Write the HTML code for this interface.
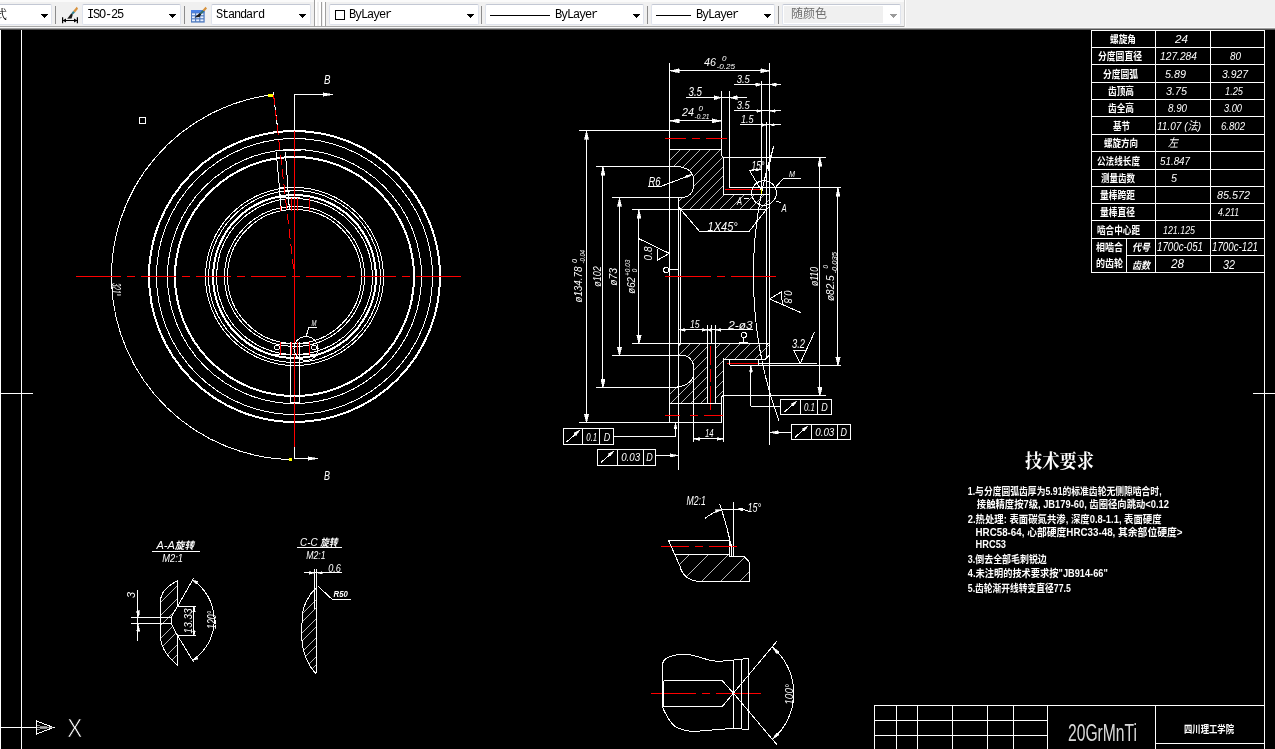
<!DOCTYPE html>
<html lang="zh"><head><meta charset="utf-8"><title>CAD</title>
<style>
html,body{margin:0;padding:0;background:#000;}
body{width:1275px;height:749px;position:relative;overflow:hidden;font-family:"Liberation Mono","Noto Sans CJK SC",monospace;}
#tb{position:absolute;left:0;top:0;width:1275px;height:27px;background:#f0f0f0;will-change:transform;}
#tb .hi{position:absolute;left:0;top:0;width:905px;height:2px;background:#fafafa;}
#tb .bot{position:absolute;left:0;top:26px;width:905px;height:1px;background:#a8a8a8;}
#l27{position:absolute;left:0;top:27px;width:1275px;height:1px;background:#f8f8f8;}
#l28{position:absolute;left:0;top:28px;width:1275px;height:1px;background:#a0a0a0;}
#l29{position:absolute;left:0;top:29px;width:1275px;height:1px;background:#505050;}
.cb{position:absolute;top:4px;height:19px;background:#fff;border:1px solid #dfe3ec;border-top-color:#c3c8d4;border-radius:2px;font-size:12px;line-height:19px;color:#000;letter-spacing:-1.2px;white-space:nowrap;}
.cb span.t{position:absolute;top:1px;}
.cb svg.ar{position:absolute;top:9px;}
.sep{position:absolute;top:6px;width:1px;height:18px;background:#8c8c8c;}
.ln{position:absolute;top:10px;height:1px;background:#000;}
svg text{fill:#fff;}
svg text.c{font-family:"Liberation Sans","Noto Sans CJK SC",sans-serif;font-style:italic;}
svg text.u{font-family:"Liberation Sans","Noto Sans CJK SC",sans-serif;}
svg text.k{font-family:"Liberation Sans","Noto Sans CJK SC",sans-serif;font-weight:bold;}
svg text.s{font-family:"Liberation Serif","Noto Serif CJK SC",serif;font-weight:bold;}
</style></head><body>
<svg width="1275" height="749" viewBox="0 0 1275 749" shape-rendering="crispEdges" style="position:absolute;left:0;top:0;will-change:transform">
<defs><clipPath id="hu"><path d="M669.5,149.5 L721.4,149.5 L721.4,155.6 L723.2,157.4 L723.2,194.6 L769.7,194.6 L769.7,206.4 L766.6,209.4 L680.8,209.4 L678.8,207.3 L678.8,197.4 L684,197.4 Q691.5,196 693.6,187.7 L693.6,177.3 Q691,167 674.5,166.3 L669.5,166.3 Z"/></clipPath>
<clipPath id="hl"><path d="M669.5,403.3 L721.4,403.3 L721.4,397.2 L723.2,395.4 L723.2,359.5 L765.2,359.5 L769.7,354.6 L769.7,346.4 L766.6,343.4 L680.8,343.4 L678.8,345.5 L678.8,355.4 L684,355.4 Q691.5,356.8 693.6,365.1 L693.6,375.5 Q691,385.8 674.5,387.3 L669.5,387.3 Z"/><rect x="0" y="0" width="0" height="0"/></clipPath>
<clipPath id="hh"><path d="M0,0H707.1V500H0Z M715.3,0H1275V500H715.3Z"/></clipPath>
<clipPath id="ha"><path d="M177.6,580.8 Q160.4,589 160.4,602 L160.4,636 Q161,652 177.6,665.2 L177.6,635.7 L171,623.2 L171,617.5 L177.6,606.2 Z"/></clipPath>
<clipPath id="hc"><path d="M315.3,588 Q303.5,602 302.2,615 L301.7,638 Q303,660 315.3,673.1 L316.9,672 L316.9,588 Z"/></clipPath>
<clipPath id="hm"><path d="M674.9,554.5 L729.4,554.5 L729.4,556.1 L744.2,556.6 L749,561.7 L749,581.3 L696.9,581.3 Q683,579 680.1,566.5 Z"/></clipPath></defs>
<g shape-rendering="crispEdges">
<rect x="0" y="29" width="1275" height="720" fill="#000" stroke="none"/>
<rect x="0" y="30" width="1" height="719" fill="#fff" stroke="none"/>
<line x1="21.5" y1="29" x2="21.5" y2="749" stroke="#fff" stroke-width="1"/>
<line x1="1264.5" y1="30" x2="1264.5" y2="749" stroke="#fff" stroke-width="1"/>
<line x1="1" y1="393.5" x2="33" y2="393.5" stroke="#fff" stroke-width="1"/>
<line x1="1253" y1="393.5" x2="1275" y2="393.5" stroke="#fff" stroke-width="1"/>
<line x1="1" y1="727.5" x2="36" y2="727.5" stroke="#fff" stroke-width="1"/>
</g>
<polygon points="36.5,721 53.5,727.5 36.5,734" fill="none" stroke="#fff" stroke-width="1"/>
<line x1="37" y1="725.5" x2="50" y2="727.5" stroke="#888" stroke-width="1"/>
<line x1="37" y1="729.5" x2="50" y2="727.5" stroke="#888" stroke-width="1"/>
<line x1="37" y1="727.5" x2="53" y2="727.5" stroke="#aaa" stroke-width="1"/>
<text class="u" x="67.2" y="737.3" font-size="25" textLength="15" lengthAdjust="spacingAndGlyphs" stroke="#000" stroke-width="0.7">X</text>
<g shape-rendering="crispEdges">
<line x1="1091" y1="30.5" x2="1265" y2="30.5" stroke="#fff" stroke-width="1"/>
<line x1="1091" y1="47.5" x2="1265" y2="47.5" stroke="#fff" stroke-width="1"/>
<line x1="1091" y1="64.5" x2="1265" y2="64.5" stroke="#fff" stroke-width="1"/>
<line x1="1091" y1="82.5" x2="1265" y2="82.5" stroke="#fff" stroke-width="1"/>
<line x1="1091" y1="99.5" x2="1265" y2="99.5" stroke="#fff" stroke-width="1"/>
<line x1="1091" y1="116.5" x2="1265" y2="116.5" stroke="#fff" stroke-width="1"/>
<line x1="1091" y1="134.5" x2="1265" y2="134.5" stroke="#fff" stroke-width="1"/>
<line x1="1091" y1="151.5" x2="1265" y2="151.5" stroke="#fff" stroke-width="1"/>
<line x1="1091" y1="169.5" x2="1265" y2="169.5" stroke="#fff" stroke-width="1"/>
<line x1="1091" y1="186.5" x2="1265" y2="186.5" stroke="#fff" stroke-width="1"/>
<line x1="1091" y1="203.5" x2="1265" y2="203.5" stroke="#fff" stroke-width="1"/>
<line x1="1091" y1="220.5" x2="1265" y2="220.5" stroke="#fff" stroke-width="1"/>
<line x1="1091" y1="238.5" x2="1265" y2="238.5" stroke="#fff" stroke-width="1"/>
<line x1="1126" y1="255.5" x2="1264" y2="255.5" stroke="#fff" stroke-width="1"/>
<line x1="1091" y1="272.5" x2="1265" y2="272.5" stroke="#fff" stroke-width="1"/>
<line x1="1091.5" y1="30" x2="1091.5" y2="273" stroke="#fff" stroke-width="1"/>
<line x1="1155.5" y1="30" x2="1155.5" y2="273" stroke="#fff" stroke-width="1"/>
<line x1="1210.5" y1="30" x2="1210.5" y2="273" stroke="#fff" stroke-width="1"/>
<line x1="1126.5" y1="238" x2="1126.5" y2="273" stroke="#fff" stroke-width="1"/>
</g>
<text class="k" x="1110" y="43.2" font-size="10.5" textLength="26" lengthAdjust="spacingAndGlyphs">螺旋角</text>
<text class="c" x="1175" y="43.2" font-size="11.73" textLength="13" lengthAdjust="spacingAndGlyphs">24</text>
<text class="k" x="1098" y="60.2" font-size="10.5" textLength="44" lengthAdjust="spacingAndGlyphs">分度圆直径</text>
<text class="c" x="1160" y="60.2" font-size="11.73" textLength="37" lengthAdjust="spacingAndGlyphs">127.284</text>
<text class="c" x="1230" y="60.2" font-size="11.73" textLength="11" lengthAdjust="spacingAndGlyphs">80</text>
<text class="k" x="1103" y="77.7" font-size="10.5" textLength="35" lengthAdjust="spacingAndGlyphs">分度圆弧</text>
<text class="c" x="1165" y="77.7" font-size="11.73" textLength="21" lengthAdjust="spacingAndGlyphs">5.89</text>
<text class="c" x="1222" y="77.7" font-size="11.73" textLength="26" lengthAdjust="spacingAndGlyphs">3.927</text>
<text class="k" x="1108" y="95.2" font-size="10.5" textLength="26" lengthAdjust="spacingAndGlyphs">齿顶高</text>
<text class="c" x="1166" y="95.2" font-size="11.73" textLength="21" lengthAdjust="spacingAndGlyphs">3.75</text>
<text class="c" x="1225" y="95.2" font-size="11.73" textLength="18" lengthAdjust="spacingAndGlyphs">1.25</text>
<text class="k" x="1108" y="112.2" font-size="10.5" textLength="26" lengthAdjust="spacingAndGlyphs">齿全高</text>
<text class="c" x="1168" y="112.2" font-size="11.73" textLength="19" lengthAdjust="spacingAndGlyphs">8.90</text>
<text class="c" x="1224" y="112.2" font-size="11.73" textLength="18" lengthAdjust="spacingAndGlyphs">3.00</text>
<text class="k" x="1113" y="129.7" font-size="10.5" textLength="17" lengthAdjust="spacingAndGlyphs">基节</text>
<text class="c" x="1157" y="129.7" font-size="11.73" textLength="44" lengthAdjust="spacingAndGlyphs">11.07 (法)</text>
<text class="c" x="1221" y="129.7" font-size="11.73" textLength="24" lengthAdjust="spacingAndGlyphs">6.802</text>
<text class="k" x="1104" y="147.2" font-size="10.5" textLength="34" lengthAdjust="spacingAndGlyphs">螺旋方向</text>
<text class="c" x="1168" y="147.2" font-size="11.73" textLength="10" lengthAdjust="spacingAndGlyphs">左</text>
<text class="k" x="1097" y="164.7" font-size="10.5" textLength="43" lengthAdjust="spacingAndGlyphs">公法线长度</text>
<text class="c" x="1160" y="164.7" font-size="11.73" textLength="30" lengthAdjust="spacingAndGlyphs">51.847</text>
<text class="k" x="1101" y="182.2" font-size="10.5" textLength="34" lengthAdjust="spacingAndGlyphs">测量齿数</text>
<text class="c" x="1171" y="182.2" font-size="11.73" textLength="6" lengthAdjust="spacingAndGlyphs">5</text>
<text class="k" x="1100" y="199.2" font-size="10.5" textLength="35" lengthAdjust="spacingAndGlyphs">量棒跨距</text>
<text class="c" x="1217" y="199.2" font-size="11.73" textLength="33" lengthAdjust="spacingAndGlyphs">85.572</text>
<text class="k" x="1100" y="216.2" font-size="10.5" textLength="35" lengthAdjust="spacingAndGlyphs">量棒直径</text>
<text class="c" x="1218" y="216.2" font-size="11.73" textLength="21" lengthAdjust="spacingAndGlyphs">4.211</text>
<text class="k" x="1097" y="233.7" font-size="10.5" textLength="43" lengthAdjust="spacingAndGlyphs">啮合中心距</text>
<text class="c" x="1163" y="233.7" font-size="11.73" textLength="32" lengthAdjust="spacingAndGlyphs">121.125</text>
<text class="k" x="1096" y="250.5" font-size="10.5" textLength="27" lengthAdjust="spacingAndGlyphs">相啮合</text>
<text class="k" x="1096" y="267" font-size="10.5" textLength="27" lengthAdjust="spacingAndGlyphs">的齿轮</text>
<text class="k" x="1132" y="251" font-size="10" font-style="italic" textLength="18" lengthAdjust="spacingAndGlyphs">代号</text>
<text class="k" x="1132" y="268.5" font-size="10" font-style="italic" textLength="18" lengthAdjust="spacingAndGlyphs">齿数</text>
<text class="c" x="1157" y="251" font-size="11.87" textLength="46" lengthAdjust="spacingAndGlyphs">1700c-051</text>
<text class="c" x="1212" y="251" font-size="11.87" textLength="46" lengthAdjust="spacingAndGlyphs">1700c-121</text>
<text class="c" x="1171" y="268" font-size="11.87" textLength="13" lengthAdjust="spacingAndGlyphs">28</text>
<text class="c" x="1223" y="268.5" font-size="11.87" textLength="12" lengthAdjust="spacingAndGlyphs">32</text>
<g shape-rendering="crispEdges">
<line x1="874" y1="705.5" x2="1265" y2="705.5" stroke="#fff" stroke-width="1"/>
<line x1="874" y1="720.5" x2="1048" y2="720.5" stroke="#fff" stroke-width="1"/>
<line x1="874" y1="735.5" x2="1048" y2="735.5" stroke="#fff" stroke-width="1"/>
<line x1="1155" y1="743.5" x2="1265" y2="743.5" stroke="#fff" stroke-width="1"/>
<line x1="874.5" y1="705" x2="874.5" y2="749" stroke="#fff" stroke-width="1"/>
<line x1="896.5" y1="705" x2="896.5" y2="749" stroke="#fff" stroke-width="1"/>
<line x1="917.5" y1="705" x2="917.5" y2="749" stroke="#fff" stroke-width="1"/>
<line x1="952.5" y1="705" x2="952.5" y2="749" stroke="#fff" stroke-width="1"/>
<line x1="987.5" y1="705" x2="987.5" y2="749" stroke="#fff" stroke-width="1"/>
<line x1="1013.5" y1="705" x2="1013.5" y2="749" stroke="#fff" stroke-width="1"/>
<line x1="1047.5" y1="705" x2="1047.5" y2="749" stroke="#fff" stroke-width="1"/>
<line x1="1155.5" y1="705" x2="1155.5" y2="749" stroke="#fff" stroke-width="1"/>
</g>
<text class="u" x="1068" y="741.3" font-size="23.5" textLength="69" lengthAdjust="spacingAndGlyphs" fill="#fff" opacity="0.85">20GrMnTi</text>
<text class="k" x="1184" y="732.5" font-size="10.5" textLength="50" lengthAdjust="spacingAndGlyphs">四川理工学院</text>
<text class="s" x="1025" y="467.5" font-size="19" textLength="69" lengthAdjust="spacingAndGlyphs">技术要求</text>
<text class="k" x="967.8" y="494.5" font-size="10.5" textLength="193.8" lengthAdjust="spacingAndGlyphs">1.与分度圆弧齿厚为5.91的标准齿轮无侧隙啮合时,</text>
<text class="k" x="976.8" y="508" font-size="10.5" textLength="192.2" lengthAdjust="spacingAndGlyphs">接触精度按7级, JB179-60, 齿圈径向跳动&lt;0.12</text>
<text class="k" x="967.8" y="522.5" font-size="10.5" textLength="193.8" lengthAdjust="spacingAndGlyphs">2.热处理: 表面碳氮共渗, 深度0.8-1.1, 表面硬度</text>
<text class="k" x="975.5" y="536" font-size="10.5" textLength="207" lengthAdjust="spacingAndGlyphs">HRC58-64, 心部硬度HRC33-48, 其余部位硬度&gt;</text>
<text class="k" x="975.5" y="548" font-size="10.5" textLength="30.5" lengthAdjust="spacingAndGlyphs">HRC53</text>
<text class="k" x="967.8" y="563" font-size="10.5" textLength="79" lengthAdjust="spacingAndGlyphs">3.倒去全部毛刺锐边</text>
<text class="k" x="967.8" y="577" font-size="10.5" textLength="140" lengthAdjust="spacingAndGlyphs">4.未注明的技术要求按"JB914-66"</text>
<text class="k" x="967.8" y="591.5" font-size="10.5" textLength="103" lengthAdjust="spacingAndGlyphs">5.齿轮渐开线转变直径77.5</text>
<g shape-rendering="crispEdges">
<circle cx="294.5" cy="276.5" r="145.5" fill="none" stroke="#fff" stroke-width="2"/>
<circle cx="294.5" cy="276.5" r="138" fill="none" stroke="#fff" stroke-width="1"/>
<circle cx="294.5" cy="276.5" r="127" fill="none" stroke="#fff" stroke-width="1"/>
<circle cx="294.5" cy="276.5" r="119.5" fill="none" stroke="#fff" stroke-width="2"/>
<circle cx="294.5" cy="276.5" r="89" fill="none" stroke="#fff" stroke-width="1"/>
<circle cx="294.5" cy="276.5" r="86" fill="none" stroke="#fff" stroke-width="1"/>
<circle cx="294.5" cy="276.5" r="81.5" fill="none" stroke="#fff" stroke-width="2"/>
<circle cx="294.5" cy="276.5" r="78" fill="none" stroke="#fff" stroke-width="1"/>
<circle cx="294.5" cy="276.5" r="70" fill="none" stroke="#fff" stroke-width="1"/>
<circle cx="294.5" cy="276.5" r="67" fill="none" stroke="#fff" stroke-width="1"/>
<path d="M274.2,94.63 A183,183 0 0 0 291,459.47" fill="none" stroke="#fff" stroke-width="1"/>
<line x1="86" y1="276.5" x2="451" y2="276.5" stroke="#ff0000" stroke-width="1" stroke-dasharray="35 6 8 6"/>
<line x1="76" y1="276.5" x2="86" y2="276.5" stroke="#ff0000" stroke-width="1"/>
<line x1="451" y1="276.5" x2="461" y2="276.5" stroke="#ff0000" stroke-width="1"/>
<line x1="294.5" y1="131" x2="294.5" y2="447" stroke="#ff0000" stroke-width="1"/>
<line x1="294.5" y1="94" x2="294.5" y2="131" stroke="#fff" stroke-width="1"/>
<line x1="294.5" y1="447" x2="294.5" y2="459" stroke="#fff" stroke-width="1"/>
<line x1="294" y1="94.5" x2="323" y2="94.5" stroke="#fff" stroke-width="1"/>
<line x1="294" y1="458.5" x2="309" y2="458.5" stroke="#fff" stroke-width="1"/>
<line x1="276" y1="150.5" x2="301" y2="150.5" stroke="#fff" stroke-width="1"/>
<line x1="276" y1="157.5" x2="295" y2="157.5" stroke="#fff" stroke-width="1"/>
<line x1="280" y1="187.5" x2="290" y2="187.5" stroke="#fff" stroke-width="1"/>
<line x1="280" y1="191.5" x2="290" y2="191.5" stroke="#fff" stroke-width="1"/>
<line x1="279" y1="197.5" x2="300" y2="197.5" stroke="#fff" stroke-width="1"/>
<line x1="280.5" y1="198" x2="280.5" y2="211" stroke="#ff0000" stroke-width="1"/>
<line x1="291.5" y1="198" x2="291.5" y2="211" stroke="#ff0000" stroke-width="1"/>
<line x1="297.5" y1="198" x2="297.5" y2="211" stroke="#ff0000" stroke-width="1"/>
<line x1="309.5" y1="198" x2="309.5" y2="211" stroke="#ff0000" stroke-width="1"/>
<line x1="280" y1="343.5" x2="310" y2="343.5" stroke="#fff" stroke-width="1"/>
<line x1="274" y1="354.5" x2="316" y2="354.5" stroke="#fff" stroke-width="1"/>
<line x1="280.5" y1="342" x2="280.5" y2="355" stroke="#ff0000" stroke-width="1"/>
<line x1="291.5" y1="342" x2="291.5" y2="355" stroke="#ff0000" stroke-width="1"/>
<line x1="297.5" y1="342" x2="297.5" y2="355" stroke="#ff0000" stroke-width="1"/>
<line x1="309.5" y1="342" x2="309.5" y2="355" stroke="#ff0000" stroke-width="1"/>
<line x1="290.5" y1="342" x2="290.5" y2="403" stroke="#fff" stroke-width="1"/>
<line x1="299.5" y1="342" x2="299.5" y2="403" stroke="#fff" stroke-width="1"/>
<line x1="290" y1="395.5" x2="300" y2="395.5" stroke="#fff" stroke-width="1"/>
<line x1="290" y1="402.5" x2="300" y2="402.5" stroke="#fff" stroke-width="1"/>
</g>
<rect x="139.5" y="117.5" width="6" height="6" fill="none" stroke="#fff"/>
<line x1="273.3" y1="92" x2="278.2" y2="133.6" stroke="#fff" stroke-width="1"/>
<line x1="276.2" y1="151.8" x2="281.4" y2="210" stroke="#fff" stroke-width="1"/>
<line x1="285.4" y1="151.8" x2="289.4" y2="210" stroke="#fff" stroke-width="1"/>
<line x1="273.6" y1="95" x2="294.5" y2="276.5" stroke="#ff0000" stroke-width="1" stroke-dasharray="10 5"/>
<polygon points="333,94.5 323,96.2 323,92.8" fill="#fff" stroke="#fff" stroke-width="0.6"/>
<polygon points="318,458.5 308,460.2 308,456.8" fill="#fff" stroke="#fff" stroke-width="0.6"/>
<text class="c" x="324" y="83.5" font-size="13.27" textLength="6.5" lengthAdjust="spacingAndGlyphs">B</text>
<text class="c" x="324" y="479.5" font-size="11.87" textLength="6" lengthAdjust="spacingAndGlyphs">B</text>
<rect x="268" y="94" width="5" height="3" fill="#ffff00" stroke="none"/>
<rect x="289" y="458" width="3" height="3" fill="#ffff00" stroke="none"/>
<text class="c" transform="translate(112,283) rotate(90)" font-size="12.57" textLength="13" lengthAdjust="spacingAndGlyphs">321°</text>
<g shape-rendering="crispEdges">
<circle cx="306" cy="348.5" r="12" fill="none" stroke="#fff" stroke-width="1"/>
</g>
<polyline points="306.1,336.7 308.8,327.4 316.8,327.4" fill="none" stroke="#fff" stroke-width="1"/>
<text class="c" x="311.5" y="325.5" font-size="8.38" textLength="5" lengthAdjust="spacingAndGlyphs">M</text>
<circle cx="277" cy="347.5" r="2.5" fill="none" stroke="#fff" stroke-width="1"/>
<circle cx="314" cy="347.5" r="2.5" fill="none" stroke="#fff" stroke-width="1"/>
<g clip-path="url(#hu)" stroke="#fff" stroke-width="0.72">
<line x1="700.4" y1="100" x2="500.4" y2="300"/>
<line x1="710.3" y1="100" x2="510.3" y2="300"/>
<line x1="720.2" y1="100" x2="520.2" y2="300"/>
<line x1="730.1" y1="100" x2="530.1" y2="300"/>
<line x1="740" y1="100" x2="540" y2="300"/>
<line x1="749.9" y1="100" x2="549.9" y2="300"/>
<line x1="759.8" y1="100" x2="559.8" y2="300"/>
<line x1="769.7" y1="100" x2="569.7" y2="300"/>
<line x1="779.6" y1="100" x2="579.6" y2="300"/>
<line x1="789.5" y1="100" x2="589.5" y2="300"/>
<line x1="799.4" y1="100" x2="599.4" y2="300"/>
<line x1="809.3" y1="100" x2="609.3" y2="300"/>
<line x1="819.2" y1="100" x2="619.2" y2="300"/>
<line x1="829.1" y1="100" x2="629.1" y2="300"/>
<line x1="839" y1="100" x2="639" y2="300"/>
<line x1="848.9" y1="100" x2="648.9" y2="300"/>
<line x1="858.8" y1="100" x2="658.8" y2="300"/>
<line x1="868.7" y1="100" x2="668.7" y2="300"/>
<line x1="878.6" y1="100" x2="678.6" y2="300"/>
<line x1="888.5" y1="100" x2="688.5" y2="300"/>
<line x1="898.4" y1="100" x2="698.4" y2="300"/>
</g>
<g clip-path="url(#hh)"><g clip-path="url(#hl)" stroke="#fff" stroke-width="0.72">
<line x1="694.8" y1="300" x2="494.8" y2="500"/>
<line x1="704.7" y1="300" x2="504.7" y2="500"/>
<line x1="714.6" y1="300" x2="514.6" y2="500"/>
<line x1="724.5" y1="300" x2="524.5" y2="500"/>
<line x1="734.4" y1="300" x2="534.4" y2="500"/>
<line x1="744.3" y1="300" x2="544.3" y2="500"/>
<line x1="754.2" y1="300" x2="554.2" y2="500"/>
<line x1="764.1" y1="300" x2="564.1" y2="500"/>
<line x1="774" y1="300" x2="574" y2="500"/>
<line x1="783.9" y1="300" x2="583.9" y2="500"/>
<line x1="793.8" y1="300" x2="593.8" y2="500"/>
<line x1="803.7" y1="300" x2="603.7" y2="500"/>
<line x1="813.6" y1="300" x2="613.6" y2="500"/>
<line x1="823.5" y1="300" x2="623.5" y2="500"/>
<line x1="833.4" y1="300" x2="633.4" y2="500"/>
<line x1="843.3" y1="300" x2="643.3" y2="500"/>
<line x1="853.2" y1="300" x2="653.2" y2="500"/>
<line x1="863.1" y1="300" x2="663.1" y2="500"/>
<line x1="873" y1="300" x2="673" y2="500"/>
<line x1="882.9" y1="300" x2="682.9" y2="500"/>
<line x1="892.8" y1="300" x2="692.8" y2="500"/>
</g></g>
<path d="M669.5,149.5 L721.4,149.5 L721.4,155.6 L723.2,157.4 L723.2,194.6 L769.7,194.6 L769.7,206.4 L766.6,209.4 L680.8,209.4 L678.8,207.3 L678.8,197.4 L684,197.4 Q691.5,196 693.6,187.7 L693.6,177.3 Q691,167 674.5,166.3 L669.5,166.3 Z" fill="none" stroke="#fff" stroke-width="1"/>
<path d="M669.5,403.3 L721.4,403.3 L721.4,397.2 L723.2,395.4 L723.2,359.5 L765.2,359.5 L769.7,354.6 L769.7,346.4 L766.6,343.4 L680.8,343.4 L678.8,345.5 L678.8,355.4 L684,355.4 Q691.5,356.8 693.6,365.1 L693.6,375.5 Q691,385.8 674.5,387.3 L669.5,387.3 Z" fill="none" stroke="#fff" stroke-width="1"/>
<g shape-rendering="crispEdges">
<line x1="669.5" y1="62.8" x2="669.5" y2="422.4" stroke="#fff" stroke-width="1"/>
<line x1="769.5" y1="62.8" x2="769.5" y2="444.6" stroke="#fff" stroke-width="1"/>
<line x1="678.5" y1="197.4" x2="678.5" y2="355.4" stroke="#fff" stroke-width="1"/>
<line x1="678.5" y1="355.4" x2="678.5" y2="470" stroke="#fff" stroke-width="1"/>
<line x1="680.5" y1="209.4" x2="680.5" y2="343.4" stroke="#fff" stroke-width="1"/>
<line x1="721.5" y1="91" x2="721.5" y2="149.5" stroke="#fff" stroke-width="1"/>
<line x1="729.5" y1="91" x2="729.5" y2="187.5" stroke="#fff" stroke-width="1"/>
<line x1="723.5" y1="157.4" x2="723.5" y2="194.6" stroke="#fff" stroke-width="1"/>
<line x1="761.5" y1="81" x2="761.5" y2="194.6" stroke="#fff" stroke-width="1"/>
<line x1="766.5" y1="121.8" x2="766.5" y2="209.4" stroke="#fff" stroke-width="1"/>
<line x1="766.5" y1="209.4" x2="766.5" y2="358.2" stroke="#fff" stroke-width="1"/>
<line x1="721.5" y1="403.3" x2="721.5" y2="422.4" stroke="#fff" stroke-width="1"/>
<line x1="723.5" y1="358.2" x2="723.5" y2="442" stroke="#fff" stroke-width="1"/>
<line x1="707.5" y1="325" x2="707.5" y2="403.3" stroke="#fff" stroke-width="1"/>
<line x1="715.5" y1="325" x2="715.5" y2="403.3" stroke="#fff" stroke-width="1"/>
<line x1="711.5" y1="325" x2="711.5" y2="343" stroke="#fff" stroke-width="1"/>
<line x1="693.5" y1="375.8" x2="693.5" y2="442" stroke="#fff" stroke-width="1"/>
<line x1="710.5" y1="345.6" x2="710.5" y2="409.8" stroke="#ff0000" stroke-width="1" stroke-dasharray="19 4 13.5 3.5 24.5"/>
<line x1="579" y1="130.5" x2="721.9" y2="130.5" stroke="#fff" stroke-width="1"/>
<line x1="579" y1="422.5" x2="721.9" y2="422.5" stroke="#fff" stroke-width="1"/>
<line x1="596" y1="166.5" x2="675" y2="166.5" stroke="#fff" stroke-width="1"/>
<line x1="596" y1="387.5" x2="679" y2="387.5" stroke="#fff" stroke-width="1"/>
<line x1="612" y1="197.5" x2="684" y2="197.5" stroke="#fff" stroke-width="1"/>
<line x1="612" y1="355.5" x2="682" y2="355.5" stroke="#fff" stroke-width="1"/>
<line x1="632" y1="209.5" x2="767" y2="209.5" stroke="#fff" stroke-width="1"/>
<line x1="632" y1="343.5" x2="770" y2="343.5" stroke="#fff" stroke-width="1"/>
<line x1="669.5" y1="149.5" x2="721.4" y2="149.5" stroke="#fff" stroke-width="1"/>
<line x1="669.5" y1="403.5" x2="721.4" y2="403.5" stroke="#fff" stroke-width="1"/>
<line x1="665.3" y1="138.5" x2="727" y2="138.5" stroke="#ff0000" stroke-width="1" stroke-dasharray="21 6 8 6"/>
<line x1="665.3" y1="415.5" x2="723" y2="415.5" stroke="#ff0000" stroke-width="1" stroke-dasharray="14.4 10.3 8 6 19"/>
<line x1="724.8" y1="189.5" x2="763" y2="189.5" stroke="#ff0000" stroke-width="1"/>
<line x1="727" y1="363.5" x2="760.5" y2="363.5" stroke="#ff0000" stroke-width="1"/>
<line x1="665.3" y1="276.5" x2="776" y2="276.5" stroke="#ff0000" stroke-width="1" stroke-dasharray="46 6 8 6"/>
<line x1="723.2" y1="157.5" x2="826" y2="157.5" stroke="#fff" stroke-width="1"/>
<line x1="723.2" y1="395.5" x2="826" y2="395.5" stroke="#fff" stroke-width="1"/>
<line x1="729.5" y1="187.5" x2="840.5" y2="187.5" stroke="#fff" stroke-width="1"/>
<line x1="729.5" y1="365.5" x2="840.5" y2="365.5" stroke="#fff" stroke-width="1"/>
<line x1="759" y1="363.5" x2="816.6" y2="363.5" stroke="#fff" stroke-width="1"/>
<line x1="586.5" y1="130.4" x2="586.5" y2="422.4" stroke="#fff" stroke-width="1"/>
<line x1="602.5" y1="166.3" x2="602.5" y2="387.3" stroke="#fff" stroke-width="1"/>
<line x1="619.5" y1="197.4" x2="619.5" y2="355.4" stroke="#fff" stroke-width="1"/>
<line x1="638.5" y1="209.4" x2="638.5" y2="343.4" stroke="#fff" stroke-width="1"/>
<line x1="819.5" y1="157.4" x2="819.5" y2="395.4" stroke="#fff" stroke-width="1"/>
<line x1="837.5" y1="187.3" x2="837.5" y2="365.2" stroke="#fff" stroke-width="1"/>
<line x1="669.5" y1="70.5" x2="769.7" y2="70.5" stroke="#fff" stroke-width="1"/>
<line x1="734" y1="84.5" x2="781" y2="84.5" stroke="#fff" stroke-width="1"/>
<line x1="686" y1="97.5" x2="747" y2="97.5" stroke="#fff" stroke-width="1"/>
<line x1="734" y1="110.5" x2="781" y2="110.5" stroke="#fff" stroke-width="1"/>
<line x1="740" y1="124.5" x2="781" y2="124.5" stroke="#fff" stroke-width="1"/>
<line x1="669.5" y1="120.5" x2="721.4" y2="120.5" stroke="#fff" stroke-width="1"/>
<line x1="679.7" y1="329.5" x2="753.4" y2="329.5" stroke="#fff" stroke-width="1"/>
<line x1="693.2" y1="438.5" x2="723.6" y2="438.5" stroke="#fff" stroke-width="1"/>
<line x1="729.5" y1="359.5" x2="729.5" y2="365.4" stroke="#fff" stroke-width="1"/>
<line x1="758.5" y1="359.5" x2="758.5" y2="365.4" stroke="#fff" stroke-width="1"/>
<line x1="750.5" y1="365.6" x2="750.5" y2="406.3" stroke="#fff" stroke-width="1"/>
<line x1="750.5" y1="406.5" x2="770" y2="406.5" stroke="#fff" stroke-width="1"/>
</g>
<polygon points="586.5,130.4 588.6,139.4 584.4,139.4" fill="#fff" stroke="#fff" stroke-width="0.6"/>
<polygon points="586.5,423.4 584.4,414.4 588.6,414.4" fill="#fff" stroke="#fff" stroke-width="0.6"/>
<polygon points="603,166.3 605.1,175.3 600.9,175.3" fill="#fff" stroke="#fff" stroke-width="0.6"/>
<polygon points="603,388 600.9,379 605.1,379" fill="#fff" stroke="#fff" stroke-width="0.6"/>
<polygon points="619.5,197.4 621.6,206.4 617.4,206.4" fill="#fff" stroke="#fff" stroke-width="0.6"/>
<polygon points="619.5,356.4 617.4,347.4 621.6,347.4" fill="#fff" stroke="#fff" stroke-width="0.6"/>
<polygon points="639,209.4 641.1,218.4 636.9,218.4" fill="#fff" stroke="#fff" stroke-width="0.6"/>
<polygon points="639,344.4 636.9,335.4 641.1,335.4" fill="#fff" stroke="#fff" stroke-width="0.6"/>
<polygon points="819.9,157.4 822,166.4 817.8,166.4" fill="#fff" stroke="#fff" stroke-width="0.6"/>
<polygon points="819.9,396.4 817.8,387.4 822,387.4" fill="#fff" stroke="#fff" stroke-width="0.6"/>
<polygon points="838,187.3 840.1,196.3 835.9,196.3" fill="#fff" stroke="#fff" stroke-width="0.6"/>
<polygon points="838,366.2 835.9,357.2 840.1,357.2" fill="#fff" stroke="#fff" stroke-width="0.6"/>
<polygon points="670,70.8 679,68.8 679,72.8" fill="#fff" stroke="#fff" stroke-width="0.6"/>
<polygon points="769.7,70.8 760.7,72.8 760.7,68.8" fill="#fff" stroke="#fff" stroke-width="0.6"/>
<polygon points="670,120.9 679,118.9 679,122.9" fill="#fff" stroke="#fff" stroke-width="0.6"/>
<polygon points="721.4,120.9 712.4,122.9 712.4,118.9" fill="#fff" stroke="#fff" stroke-width="0.6"/>
<polygon points="761.6,84.6 755.6,86.4 755.6,82.8" fill="#fff" stroke="#fff" stroke-width="0.6"/>
<polygon points="770.2,84.6 776.2,82.8 776.2,86.4" fill="#fff" stroke="#fff" stroke-width="0.6"/>
<polygon points="721.4,97.7 714.4,99.6 714.4,95.8" fill="#fff" stroke="#fff" stroke-width="0.6"/>
<polygon points="730,97.7 737,95.8 737,99.6" fill="#fff" stroke="#fff" stroke-width="0.6"/>
<polygon points="761.6,111 756.6,112.4 756.6,109.6" fill="#fff" stroke="#fff" stroke-width="0.6"/>
<polygon points="770.2,111 775.2,109.6 775.2,112.4" fill="#fff" stroke="#fff" stroke-width="0.6"/>
<polygon points="766.4,124.9 762.4,126.1 762.4,123.7" fill="#fff" stroke="#fff" stroke-width="0.6"/>
<polygon points="770.2,124.9 774.2,123.7 774.2,126.1" fill="#fff" stroke="#fff" stroke-width="0.6"/>
<polygon points="679.3,329.9 685.3,328.5 685.3,331.3" fill="#fff" stroke="#fff" stroke-width="0.6"/>
<polygon points="707.1,329.9 702.1,331.3 702.1,328.5" fill="#fff" stroke="#fff" stroke-width="0.6"/>
<polygon points="707.6,329.9 710.6,328.6 710.6,331.2" fill="#fff" stroke="#fff" stroke-width="0.6"/>
<polygon points="715.8,329.9 720.8,328.5 720.8,331.3" fill="#fff" stroke="#fff" stroke-width="0.6"/>
<polygon points="693.7,438.9 699.7,437.5 699.7,440.3" fill="#fff" stroke="#fff" stroke-width="0.6"/>
<polygon points="723.2,438.9 717.2,440.3 717.2,437.5" fill="#fff" stroke="#fff" stroke-width="0.6"/>
<polygon points="751,366 752.4,372 749.6,372" fill="#fff" stroke="#fff" stroke-width="0.6"/>
<path d="M773.7,146 A424,424 0 0 0 778.9,420.7" fill="none" stroke="#fff" stroke-width="1"/>
<polyline points="680.6,209.4 699.7,231.5 749,231.5 766.5,209.4" fill="none" stroke="#fff" stroke-width="1"/>
<text class="c" x="707.5" y="230.5" font-size="11.87" textLength="30.3" lengthAdjust="spacingAndGlyphs">1X45°</text>
<polyline points="648,186.5 660.6,186.5 691.9,174.6" fill="none" stroke="#fff" stroke-width="1"/>
<polygon points="691.9,174.6 686.75,177.95 685.83,175.52" fill="#fff" stroke="#fff" stroke-width="0.6"/>
<text class="c" x="648.5" y="185.5" font-size="11.87" textLength="12.1" lengthAdjust="spacingAndGlyphs">R6</text>
<circle cx="764" cy="193" r="12.3" fill="none" stroke="#fff" stroke-width="1"/>
<polyline points="776.3,186.4 783.3,178.5 801.1,178.5" fill="none" stroke="#fff" stroke-width="1"/>
<text class="c" x="789" y="176.5" font-size="9.08" textLength="6" lengthAdjust="spacingAndGlyphs">M</text>
<line x1="776" y1="201" x2="780.7" y2="202.5" stroke="#fff" stroke-width="1"/>
<text class="c" x="781.5" y="211.5" font-size="10.89" textLength="5.2" lengthAdjust="spacingAndGlyphs">A</text>
<text class="c" x="737" y="205" font-size="11.17" textLength="5" lengthAdjust="spacingAndGlyphs">A</text>
<line x1="743.5" y1="198" x2="749" y2="198" stroke="#fff" stroke-width="1"/>
<text class="c" x="751.5" y="170.4" font-size="12.15" textLength="13" lengthAdjust="spacingAndGlyphs">15°</text>
<line x1="749.4" y1="170.3" x2="761.6" y2="190.7" stroke="#fff" stroke-width="1"/>
<line x1="749.4" y1="170.3" x2="760.7" y2="169.6" stroke="#fff" stroke-width="1"/>
<polygon points="760.7,169.6 755.8,171.15 755.63,168.75" fill="#fff" stroke="#fff" stroke-width="0.6"/>
<line x1="773.7" y1="146" x2="768" y2="171" stroke="#fff" stroke-width="1"/>
<rect x="760.6" y="189" width="1.2" height="5" fill="#ffff00" stroke="none"/>
<text class="c" x="704" y="65.8" font-size="10.8" textLength="12" lengthAdjust="spacingAndGlyphs">46</text>
<text class="c" x="716.5" y="68.7" font-size="8" textLength="18.5" lengthAdjust="spacingAndGlyphs">-0.25</text>
<text class="c" x="722" y="61" font-size="8">0</text>
<text class="c" x="736.7" y="83.2" font-size="11.45" textLength="13.1" lengthAdjust="spacingAndGlyphs">3.5</text>
<text class="c" x="688.5" y="95.5" font-size="11.87" textLength="13.5" lengthAdjust="spacingAndGlyphs">3.5</text>
<text class="c" x="736.7" y="109.3" font-size="11.59" textLength="13.1" lengthAdjust="spacingAndGlyphs">3.5</text>
<text class="c" x="741" y="123.3" font-size="11.59" textLength="12.7" lengthAdjust="spacingAndGlyphs">1.5</text>
<text class="c" x="682" y="116" font-size="10.8" textLength="12" lengthAdjust="spacingAndGlyphs">24</text>
<text class="c" x="694.5" y="119" font-size="8" textLength="15" lengthAdjust="spacingAndGlyphs">-0.21</text>
<text class="c" x="698.5" y="111" font-size="8">0</text>
<text class="c" transform="translate(582.3,302.6) rotate(-90)" font-size="11.7" textLength="36" lengthAdjust="spacingAndGlyphs">ø134.78</text>
<text class="c" transform="translate(585,263.5) rotate(-90)" font-size="7.5" textLength="13.5" lengthAdjust="spacingAndGlyphs">-0.04</text>
<text class="c" transform="translate(576.7,263) rotate(-90)" font-size="7.5" textLength="4" lengthAdjust="spacingAndGlyphs">0</text>
<text class="c" transform="translate(601,286.7) rotate(-90)" font-size="11.7" textLength="20.5" lengthAdjust="spacingAndGlyphs">ø102</text>
<text class="c" transform="translate(616.9,285.8) rotate(-90)" font-size="11.7" textLength="17.8" lengthAdjust="spacingAndGlyphs">ø73</text>
<text class="c" transform="translate(634.6,293.7) rotate(-90)" font-size="11.7" textLength="16.7" lengthAdjust="spacingAndGlyphs">ø62</text>
<text class="c" transform="translate(630,276) rotate(-90)" font-size="7.5" textLength="16.4" lengthAdjust="spacingAndGlyphs">+0.03</text>
<text class="c" transform="translate(636.5,272.2) rotate(-90)" font-size="7.5" textLength="3.5" lengthAdjust="spacingAndGlyphs">0</text>
<text class="c" transform="translate(818,286.1) rotate(-90)" font-size="11.7" textLength="19.1" lengthAdjust="spacingAndGlyphs">ø110</text>
<text class="c" transform="translate(834.3,301) rotate(-90)" font-size="11.7" textLength="25.6" lengthAdjust="spacingAndGlyphs">ø82.5</text>
<text class="c" transform="translate(837.1,273.5) rotate(-90)" font-size="7.5" textLength="21.5" lengthAdjust="spacingAndGlyphs">-0.035</text>
<text class="c" transform="translate(828.3,268.4) rotate(-90)" font-size="7.5" textLength="3.5" lengthAdjust="spacingAndGlyphs">0</text>
<text class="c" x="690" y="328" font-size="10.89" textLength="9.7" lengthAdjust="spacingAndGlyphs">15</text>
<text class="c" x="728.3" y="328.5" font-size="11.59" textLength="24.3" lengthAdjust="spacingAndGlyphs">2-ø3</text>
<text class="c" x="704.9" y="437.2" font-size="11.17" textLength="8.6" lengthAdjust="spacingAndGlyphs">14</text>
<circle cx="666.2" cy="270" r="2.5" fill="none" stroke="#fff" stroke-width="1"/>
<line x1="668.7" y1="269.6" x2="678" y2="269.6" stroke="#fff" stroke-width="1"/>
<line x1="678.5" y1="265.5" x2="678.5" y2="273.5" stroke="#fff" stroke-width="1"/>
<circle cx="743.9" cy="335" r="2.5" fill="none" stroke="#fff" stroke-width="1"/>
<line x1="743.9" y1="337.5" x2="743.9" y2="342.8" stroke="#fff" stroke-width="1"/>
<rect x="739" y="342" width="9" height="2" fill="#fff" stroke="none"/>
<polyline points="638.9,238.7 669.3,253.4 657.2,260.4 658,248.7" fill="none" stroke="#fff" stroke-width="1"/>
<text class="c" transform="translate(652,260.4) rotate(-90)" font-size="11.17" textLength="13.9" lengthAdjust="spacingAndGlyphs">0.8</text>
<polyline points="800.6,312.5 769.7,299 781.7,291.7 782.2,304.3" fill="none" stroke="#fff" stroke-width="1"/>
<text class="c" transform="translate(783.5,290.3) rotate(90)" font-size="10.47" textLength="13" lengthAdjust="spacingAndGlyphs">0.8</text>
<polyline points="793.7,350.2 806.2,350.2 800.3,363.2 793.7,350.2" fill="none" stroke="#fff" stroke-width="1"/>
<line x1="800.3" y1="363.2" x2="814.5" y2="332" stroke="#fff" stroke-width="1"/>
<text class="c" x="792" y="348.4" font-size="12.57" textLength="13" lengthAdjust="spacingAndGlyphs">3.2</text>
<g shape-rendering="crispEdges">
<rect x="563.5" y="428.5" width="50" height="16" fill="none" stroke="#fff"/>
<line x1="582.5" y1="428.4" x2="582.5" y2="444.5" stroke="#fff" stroke-width="1"/>
<line x1="599.5" y1="428.4" x2="599.5" y2="444.5" stroke="#fff" stroke-width="1"/>
</g>
<line x1="566.55" y1="441.95" x2="578.05" y2="431.95" stroke="#fff" stroke-width="1"/>
<polygon points="579.55,430.45 576.07,435.59 573.97,433.18" fill="#fff" stroke="#fff" stroke-width="0.6"/>
<text class="c" x="586.25" y="440.75" font-size="11.59" textLength="11" lengthAdjust="spacingAndGlyphs">0.1</text>
<text class="c" x="603.85" y="440.75" font-size="11.59" textLength="6.5" lengthAdjust="spacingAndGlyphs">D</text>
<g shape-rendering="crispEdges">
<rect x="597.5" y="449.5" width="58" height="16" fill="none" stroke="#fff"/>
<line x1="617.5" y1="449.2" x2="617.5" y2="465" stroke="#fff" stroke-width="1"/>
<line x1="643.5" y1="449.2" x2="643.5" y2="465" stroke="#fff" stroke-width="1"/>
</g>
<line x1="600.8" y1="462.6" x2="612.3" y2="452.6" stroke="#fff" stroke-width="1"/>
<polygon points="613.8,451.1 610.32,456.24 608.22,453.83" fill="#fff" stroke="#fff" stroke-width="0.6"/>
<text class="c" x="621.15" y="461.4" font-size="11.59" textLength="19" lengthAdjust="spacingAndGlyphs">0.03</text>
<text class="c" x="646.2" y="461.4" font-size="11.59" textLength="6.5" lengthAdjust="spacingAndGlyphs">D</text>
<g shape-rendering="crispEdges">
<rect x="780.5" y="399.5" width="51" height="15" fill="none" stroke="#fff"/>
<line x1="800.5" y1="399.3" x2="800.5" y2="414.6" stroke="#fff" stroke-width="1"/>
<line x1="817.5" y1="399.3" x2="817.5" y2="414.6" stroke="#fff" stroke-width="1"/>
</g>
<line x1="783.8" y1="412.45" x2="795.3" y2="402.45" stroke="#fff" stroke-width="1"/>
<polygon points="796.8,400.95 793.32,406.09 791.22,403.68" fill="#fff" stroke="#fff" stroke-width="0.6"/>
<text class="c" x="803.95" y="411.25" font-size="11.59" textLength="11" lengthAdjust="spacingAndGlyphs">0.1</text>
<text class="c" x="821.3" y="411.25" font-size="11.59" textLength="6.5" lengthAdjust="spacingAndGlyphs">D</text>
<g shape-rendering="crispEdges">
<rect x="791.5" y="424.5" width="59" height="15" fill="none" stroke="#fff"/>
<line x1="811.5" y1="424.1" x2="811.5" y2="439.8" stroke="#fff" stroke-width="1"/>
<line x1="837.5" y1="424.1" x2="837.5" y2="439.8" stroke="#fff" stroke-width="1"/>
</g>
<line x1="794.85" y1="437.45" x2="806.35" y2="427.45" stroke="#fff" stroke-width="1"/>
<polygon points="807.85,425.95 804.37,431.09 802.27,428.68" fill="#fff" stroke="#fff" stroke-width="0.6"/>
<text class="c" x="815.3" y="436.25" font-size="11.59" textLength="19" lengthAdjust="spacingAndGlyphs">0.03</text>
<text class="c" x="840.5" y="436.25" font-size="11.59" textLength="6.5" lengthAdjust="spacingAndGlyphs">D</text>
<polyline points="613.8,436.5 675.5,436.5 675.5,423.7" fill="none" stroke="#fff" stroke-width="1"/>
<polygon points="675.5,422.9 677,428.9 674,428.9" fill="#fff" stroke="#fff" stroke-width="0.6"/>
<line x1="655.4" y1="455.5" x2="678" y2="455.5" stroke="#fff" stroke-width="1"/>
<polygon points="678,455.5 670,457.1 670,453.9" fill="#fff" stroke="#fff" stroke-width="0.6"/>
<polyline points="780.3,406.5 750.5,406.5" fill="none" stroke="#fff" stroke-width="1"/>
<line x1="791.1" y1="432.5" x2="770" y2="432.5" stroke="#fff" stroke-width="1"/>
<polygon points="770,432.5 778,430.9 778,434.1" fill="#fff" stroke="#fff" stroke-width="0.6"/>
<text class="c" x="156.5" y="549.3" font-size="11.5" textLength="37.5" lengthAdjust="spacingAndGlyphs">A-A<tspan font-weight="bold" font-size="10">旋转</tspan></text>
<g shape-rendering="crispEdges">
<line x1="152" y1="551.5" x2="200" y2="551.5" stroke="#fff" stroke-width="1"/>
<line x1="297" y1="547.5" x2="341.5" y2="547.5" stroke="#fff" stroke-width="1"/>
</g>
<text class="c" x="162.2" y="562" font-size="11.45" textLength="20.8" lengthAdjust="spacingAndGlyphs">M2:1</text>
<g clip-path="url(#ha)" stroke="#fff" stroke-width="0.72">
<line x1="180" y1="560" x2="60" y2="680"/>
<line x1="191.5" y1="560" x2="71.5" y2="680"/>
<line x1="203" y1="560" x2="83" y2="680"/>
<line x1="214.5" y1="560" x2="94.5" y2="680"/>
<line x1="226" y1="560" x2="106" y2="680"/>
<line x1="237.5" y1="560" x2="117.5" y2="680"/>
<line x1="249" y1="560" x2="129" y2="680"/>
<line x1="260.5" y1="560" x2="140.5" y2="680"/>
<line x1="272" y1="560" x2="152" y2="680"/>
<line x1="283.5" y1="560" x2="163.5" y2="680"/>
<line x1="295" y1="560" x2="175" y2="680"/>
</g>
<path d="M177.6,580.8 Q160.4,589 160.4,602 L160.4,636 Q161,652 177.6,665.2 L177.6,635.7 L171,623.2 L171,617.5 L177.6,606.2 Z" fill="none" stroke="#fff" stroke-width="1"/>
<g shape-rendering="crispEdges">
<line x1="131" y1="617.5" x2="171" y2="617.5" stroke="#fff" stroke-width="1"/>
<line x1="131" y1="623.5" x2="171" y2="623.5" stroke="#fff" stroke-width="1"/>
<line x1="137.5" y1="590.3" x2="137.5" y2="641.4" stroke="#fff" stroke-width="1"/>
<line x1="177.6" y1="606.5" x2="196" y2="606.5" stroke="#fff" stroke-width="1"/>
<line x1="177.6" y1="635.5" x2="196" y2="635.5" stroke="#fff" stroke-width="1"/>
<line x1="193.5" y1="606.2" x2="193.5" y2="635.7" stroke="#fff" stroke-width="1"/>
</g>
<polygon points="138.2,617.5 136.7,610.5 139.7,610.5" fill="#fff" stroke="#fff" stroke-width="0.6"/>
<polygon points="138.2,624 139.7,631 136.7,631" fill="#fff" stroke="#fff" stroke-width="0.6"/>
<polygon points="194,606.5 195.3,611.5 192.7,611.5" fill="#fff" stroke="#fff" stroke-width="0.6"/>
<polygon points="194,635.7 192.7,630.7 195.3,630.7" fill="#fff" stroke="#fff" stroke-width="0.6"/>
<text class="c" transform="translate(135.4,598) rotate(-90)" font-size="10.34" textLength="6" lengthAdjust="spacingAndGlyphs">3</text>
<text class="c" transform="translate(191.7,633.4) rotate(-90)" font-size="11.17" textLength="24.9" lengthAdjust="spacingAndGlyphs">13.33</text>
<line x1="177.6" y1="606.2" x2="193.5" y2="578.5" stroke="#fff" stroke-width="1"/>
<line x1="177.6" y1="635.7" x2="193.5" y2="661.8" stroke="#fff" stroke-width="1"/>
<path d="M192.5,580 A47.95,47.95 0 0 1 192.5,660.3" fill="none" stroke="#fff" stroke-width="1"/>
<polygon points="192,580 197.95,581.58 196.64,584.05" fill="#fff" stroke="#fff" stroke-width="0.6"/>
<polygon points="192,660.5 196.64,656.45 197.95,658.92" fill="#fff" stroke="#fff" stroke-width="0.6"/>
<text class="c" transform="translate(216,629) rotate(-90)" font-size="12.57" textLength="18.3" lengthAdjust="spacingAndGlyphs">120°</text>
<text class="c" x="300" y="545.8" font-size="11.5" textLength="37.5" lengthAdjust="spacingAndGlyphs">C-C <tspan font-weight="bold" font-size="10">旋转</tspan></text>
<text class="c" x="306.2" y="558.6" font-size="11.45" textLength="19.3" lengthAdjust="spacingAndGlyphs">M2:1</text>
<g shape-rendering="crispEdges">
<line x1="304" y1="572.5" x2="342" y2="572.5" stroke="#fff" stroke-width="1"/>
<line x1="314.5" y1="568.8" x2="314.5" y2="608.5" stroke="#fff" stroke-width="1"/>
<line x1="316.5" y1="568.8" x2="316.5" y2="672" stroke="#fff" stroke-width="1"/>
</g>
<polygon points="314.2,572.9 309.2,574.2 309.2,571.6" fill="#fff" stroke="#fff" stroke-width="0.6"/>
<polygon points="317.4,572.9 322.4,571.6 322.4,574.2" fill="#fff" stroke="#fff" stroke-width="0.6"/>
<text class="c" x="328.2" y="571.7" font-size="11.31" textLength="12.8" lengthAdjust="spacingAndGlyphs">0.6</text>
<g clip-path="url(#hc)" stroke="#fff" stroke-width="0.72">
<line x1="335" y1="570" x2="215" y2="690"/>
<line x1="344.5" y1="570" x2="224.5" y2="690"/>
<line x1="354" y1="570" x2="234" y2="690"/>
<line x1="363.5" y1="570" x2="243.5" y2="690"/>
<line x1="373" y1="570" x2="253" y2="690"/>
<line x1="382.5" y1="570" x2="262.5" y2="690"/>
<line x1="392" y1="570" x2="272" y2="690"/>
<line x1="401.5" y1="570" x2="281.5" y2="690"/>
<line x1="411" y1="570" x2="291" y2="690"/>
<line x1="420.5" y1="570" x2="300.5" y2="690"/>
</g>
<path d="M315.3,588 Q303.5,602 302.2,615 L301.7,638 Q303,660 315.3,673.1 L316.9,672 L316.9,588 Z" fill="none" stroke="#fff" stroke-width="1"/>
<polyline points="317.6,585.8 332.3,599.4 350.9,599.4" fill="none" stroke="#fff" stroke-width="1"/>
<text class="k" x="333.5" y="597" font-size="9.5" font-style="italic" textLength="14.3" lengthAdjust="spacingAndGlyphs">R50</text>
<text class="c" x="686.5" y="505.3" font-size="12.29" textLength="19.2" lengthAdjust="spacingAndGlyphs">M2:1</text>
<text class="c" x="747.4" y="512" font-size="12.29" textLength="13.6" lengthAdjust="spacingAndGlyphs">15°</text>
<g clip-path="url(#hm)" stroke="#fff" stroke-width="0.72">
<line x1="684.3" y1="540" x2="624.3" y2="600"/>
<line x1="703.7" y1="540" x2="643.7" y2="600"/>
<line x1="723.1" y1="540" x2="663.1" y2="600"/>
<line x1="742.5" y1="540" x2="682.5" y2="600"/>
<line x1="761.9" y1="540" x2="701.9" y2="600"/>
<line x1="781.3" y1="540" x2="721.3" y2="600"/>
<line x1="800.7" y1="540" x2="740.7" y2="600"/>
<line x1="820.1" y1="540" x2="760.1" y2="600"/>
<line x1="839.5" y1="540" x2="779.5" y2="600"/>
<line x1="858.9" y1="540" x2="798.9" y2="600"/>
</g>
<path d="M674.9,554.5 L729.4,554.5 L729.4,556.1 L744.2,556.6 L749,561.7 L749,581.3 L696.9,581.3 Q683,579 680.1,566.5 Z" fill="none" stroke="#fff" stroke-width="1"/>
<g shape-rendering="crispEdges">
<line x1="668.5" y1="540.5" x2="729.4" y2="540.5" stroke="#fff" stroke-width="1"/>
<line x1="729.5" y1="540.4" x2="729.5" y2="554.5" stroke="#fff" stroke-width="1"/>
<line x1="731.5" y1="544" x2="731.5" y2="556" stroke="#fff" stroke-width="1"/>
<line x1="733.5" y1="502.1" x2="733.5" y2="556.1" stroke="#fff" stroke-width="1"/>
<line x1="661.2" y1="546.5" x2="737" y2="546.5" stroke="#ff0000" stroke-width="1" stroke-dasharray="28 6 8 6"/>
</g>
<line x1="668.5" y1="540.4" x2="680.1" y2="566.5" stroke="#fff" stroke-width="1"/>
<path d="M719.6,504 Q727,525 732.1,550.5" fill="none" stroke="#fff" stroke-width="1"/>
<path d="M704.9,518.5 Q714,511 724.1,509.3 L742.6,509.3 L750.6,512" fill="none" stroke="#fff" stroke-width="1"/>
<polygon points="722.5,509.6 715.96,512.52 715.34,509.59" fill="#fff" stroke="#fff" stroke-width="0.6"/>
<polygon points="735.5,509.3 742.5,507.8 742.5,510.8" fill="#fff" stroke="#fff" stroke-width="0.6"/>
<g shape-rendering="crispEdges">
<line x1="651" y1="693.5" x2="762" y2="693.5" stroke="#ff0000" stroke-width="1" stroke-dasharray="45 6 8 6"/>
<line x1="733.5" y1="660.2" x2="733.5" y2="728.5" stroke="#fff" stroke-width="1"/>
<line x1="741.5" y1="659.5" x2="741.5" y2="728.8" stroke="#fff" stroke-width="1"/>
<line x1="748.5" y1="658.3" x2="748.5" y2="729.6" stroke="#fff" stroke-width="1"/>
<line x1="662.5" y1="666.5" x2="662.5" y2="704.7" stroke="#fff" stroke-width="1"/>
<line x1="663.5" y1="680.5" x2="722.1" y2="680.5" stroke="#fff" stroke-width="1"/>
<line x1="663.5" y1="706.5" x2="722.1" y2="706.5" stroke="#fff" stroke-width="1"/>
<line x1="663.5" y1="680.5" x2="663.5" y2="706.6" stroke="#fff" stroke-width="1"/>
</g>
<path d="M662.2,666.5 Q662.5,661 666,658.5 Q672,654.5 684.5,654.1 Q692,654.5 708.3,659.9 Q716,661.5 719.4,661.3 L735.3,659.9 L748.8,658.3" fill="none" stroke="#fff" stroke-width="1"/>
<path d="M662.2,704.7 Q664,712 666.2,714.2 Q669,721 675,726.5 Q683,731 692.4,731.3 Q700,731.3 719.4,729.3 L735.3,728.5 L748.8,729.6" fill="none" stroke="#fff" stroke-width="1"/>
<line x1="722.1" y1="680.5" x2="733.4" y2="693.2" stroke="#fff" stroke-width="1"/>
<line x1="722.1" y1="706.6" x2="733.4" y2="693.2" stroke="#fff" stroke-width="1"/>
<line x1="723.5" y1="682" x2="732" y2="691.7" stroke="#fff" stroke-width="1"/>
<line x1="723.5" y1="705.2" x2="732" y2="694.7" stroke="#fff" stroke-width="1"/>
<line x1="733.4" y1="693.2" x2="776.9" y2="641.1" stroke="#fff" stroke-width="1"/>
<line x1="733.4" y1="693.2" x2="776.9" y2="744.7" stroke="#fff" stroke-width="1"/>
<path d="M772.2,646.9 A60.4,60.4 0 0 1 772.2,739.5" fill="none" stroke="#fff" stroke-width="1"/>
<polygon points="772.4,647 779.11,651.64 776.81,653.87" fill="#fff" stroke="#fff" stroke-width="0.6"/>
<polygon points="772.4,739.4 776.81,732.53 779.11,734.76" fill="#fff" stroke="#fff" stroke-width="0.6"/>
<text class="c" transform="translate(792.5,704.7) rotate(-90)" font-size="11.59" textLength="20.7" lengthAdjust="spacingAndGlyphs">100°</text>
</svg>
<div id="tb"><div class="hi"></div><div class="bot"></div>
<div class="cb" style="left:-2px;width:52px;"><span class="t" style="left:-4px;letter-spacing:0;font-family:'Liberation Serif','Noto Serif CJK SC',serif;">式</span><svg class="ar" style="left:42px" width="7" height="4" viewBox="0 0 7 4" shape-rendering="crispEdges"><polygon points="0,0 7,0 3.5,4" fill="#000"/></svg></div>
<div class="sep" style="left:55px"></div>
<svg style="position:absolute;left:61px;top:6px" width="18" height="18" viewBox="0 0 18 18"><path d="M15.8,0.8 L12.2,5 L14,6.4 L17,2.8Z" fill="#d8923c"/><path d="M12.2,5 L10.2,7.4 L11.8,8.6 L14,6.4Z" fill="#30808c"/><path d="M10.2,7.4 L6.2,12.8 L10.6,12.4 L11.8,8.6Z" fill="#1a1a1a"/><path d="M1.6,11.2v6M16.4,11.2v6M1.6,14.5h14.8" stroke="#000" stroke-width="1.2" fill="none"/><path d="M1.6,14.5l3.4,-2v4zM16.4,14.5l-3.4,-2v4z" fill="#000"/></svg>
<div class="cb" style="left:82px;width:97px;"><span class="t" style="left:4px">ISO-25</span><svg class="ar" style="left:86px" width="7" height="4" viewBox="0 0 7 4" shape-rendering="crispEdges"><polygon points="0,0 7,0 3.5,4" fill="#000"/></svg></div>
<div class="sep" style="left:184px"></div>
<svg style="position:absolute;left:190px;top:6px" width="18" height="18" viewBox="0 0 18 18"><rect x="1" y="4" width="13.7" height="12.6" fill="#527dc0"/><rect x="1" y="4" width="13.7" height="2.6" fill="#4a82e6"/><g fill="#e8f0ff"><rect x="2" y="7.4" width="3" height="1.8"/><rect x="6.2" y="7.4" width="3" height="1.8"/><rect x="10.4" y="7.4" width="3" height="1.8"/><rect x="2" y="10.4" width="3" height="1.8"/><rect x="6.2" y="10.4" width="3" height="1.8"/><rect x="10.4" y="10.4" width="3" height="1.8"/><rect x="2" y="13.4" width="3" height="1.8"/><rect x="6.2" y="13.4" width="3" height="1.8"/><rect x="10.4" y="13.4" width="3" height="1.8"/></g><path d="M15.6,0.8 L12.4,4.2 L14.2,5.6 L17,2.6Z" fill="#d8923c"/><path d="M12.4,4.2 L9.8,7 L11.2,8.2 L14.2,5.6Z" fill="#30706c"/><path d="M9.8,7 L4.4,11.6 L9.6,11 L11.2,8.2Z" fill="#1a1a1a"/></svg>
<div class="cb" style="left:211px;width:98px;"><span class="t" style="left:4px">Standard</span><svg class="ar" style="left:87px" width="7" height="4" viewBox="0 0 7 4" shape-rendering="crispEdges"><polygon points="0,0 7,0 3.5,4" fill="#000"/></svg></div>
<div style="position:absolute;left:315px;top:0;width:2px;height:26px;background:#fff"></div>
<div style="position:absolute;left:314px;top:0;width:1px;height:27px;background:#a0a0a0"></div>
<div style="position:absolute;left:319px;top:2px;width:2px;height:24px;background:#fff"></div><div style="position:absolute;left:321px;top:2px;width:1px;height:24px;background:#a0a0a0"></div>
<div style="position:absolute;left:323px;top:2px;width:2px;height:24px;background:#fff"></div><div style="position:absolute;left:325px;top:2px;width:1px;height:24px;background:#a0a0a0"></div>
<div class="cb" style="left:329px;width:148px;"><div style="position:absolute;left:5px;top:5px;width:8px;height:8px;border:1px solid #000;background:#fff"></div><span class="t" style="left:19px">ByLayer</span><svg class="ar" style="left:137px" width="7" height="4" viewBox="0 0 7 4" shape-rendering="crispEdges"><polygon points="0,0 7,0 3.5,4" fill="#000"/></svg></div>
<div class="sep" style="left:481px"></div>
<div class="cb" style="left:485px;width:157px;"><div class="ln" style="left:4px;width:60px"></div><span class="t" style="left:69px">ByLayer</span><svg class="ar" style="left:147px" width="7" height="4" viewBox="0 0 7 4" shape-rendering="crispEdges"><polygon points="0,0 7,0 3.5,4" fill="#000"/></svg></div>
<div class="sep" style="left:647px"></div>
<div class="cb" style="left:651px;width:122px;"><div class="ln" style="left:4px;width:35px"></div><span class="t" style="left:44px">ByLayer</span><svg class="ar" style="left:112px" width="7" height="4" viewBox="0 0 7 4" shape-rendering="crispEdges"><polygon points="0,0 7,0 3.5,4" fill="#000"/></svg></div>
<div class="sep" style="left:778px"></div>
<div class="cb" style="left:782px;width:117px;"><div style="position:absolute;left:1px;top:1px;width:99px;height:17px;background:#f0f0f0"></div><span class="t" style="left:8px;top:0;color:#6d6d6d;letter-spacing:0;font-family:'Liberation Sans','Noto Sans CJK SC',sans-serif;">随颜色</span><svg class="ar" style="left:107px" width="7" height="4" viewBox="0 0 7 4" shape-rendering="crispEdges"><polygon points="0,0 7,0 3.5,4" fill="#9a9a9a"/></svg></div>
<div style="position:absolute;left:905px;top:0;width:1px;height:27px;background:#fff"></div>
<div style="position:absolute;left:904px;top:0;width:1px;height:27px;background:#d0d0d0"></div>
</div>
<div id="l27"></div><div id="l28"></div><div id="l29"></div>
</body></html>
